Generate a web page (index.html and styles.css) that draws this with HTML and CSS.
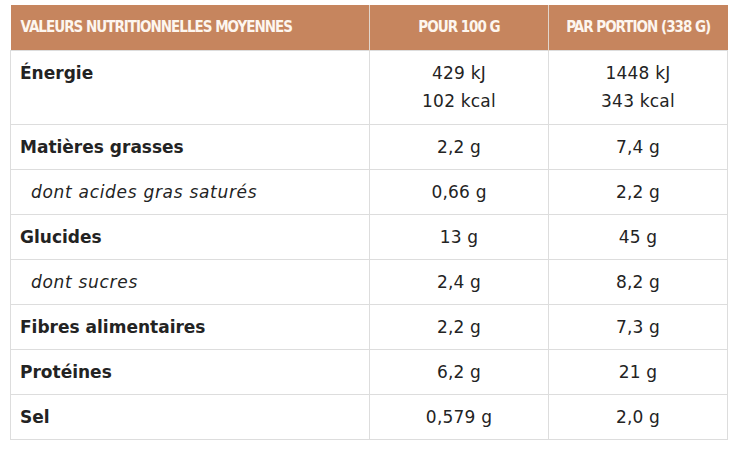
FILE: index.html
```html
<!DOCTYPE html>
<html lang="fr">
<head>
<meta charset="utf-8">
<title>Valeurs nutritionnelles</title>
<link rel="stylesheet" href="styles.css">
</head>
<body>
<table class="nutri">
  <colgroup>
    <col class="c-name">
    <col class="c-val">
    <col class="c-val">
  </colgroup>
  <thead>
    <tr>
      <th class="h-name">VALEURS NUTRITIONNELLES MOYENNES</th>
      <th>POUR 100 G</th>
      <th>PAR PORTION (338 G)</th>
    </tr>
  </thead>
  <tbody>
    <tr class="energy">
      <td class="name">Énergie</td>
      <td>429 kJ<br>102 kcal</td>
      <td>1448 kJ<br>343 kcal</td>
    </tr>
    <tr>
      <td class="name">Matières grasses</td>
      <td>2,2 g</td>
      <td>7,4 g</td>
    </tr>
    <tr>
      <td class="sub">dont acides gras saturés</td>
      <td>0,66 g</td>
      <td>2,2 g</td>
    </tr>
    <tr>
      <td class="name">Glucides</td>
      <td>13 g</td>
      <td>45 g</td>
    </tr>
    <tr>
      <td class="sub">dont sucres</td>
      <td>2,4 g</td>
      <td>8,2 g</td>
    </tr>
    <tr>
      <td class="name">Fibres alimentaires</td>
      <td>2,2 g</td>
      <td>7,3 g</td>
    </tr>
    <tr>
      <td class="name">Protéines</td>
      <td>6,2 g</td>
      <td>21 g</td>
    </tr>
    <tr>
      <td class="name">Sel</td>
      <td>0,579 g</td>
      <td>2,0 g</td>
    </tr>
  </tbody>
</table>
</body>
</html>
```
FILE: styles.css
```css
html, body {
  margin: 0;
  padding: 0;
  background: #ffffff;
}
body {
  padding: 5px 10px;
  font-family: "DejaVu Sans", "Open Sans", sans-serif;
  color: #232323;
}
.nutri {
  width: 718px;
  border-collapse: collapse;
  table-layout: fixed;
}
.c-name { width: 359px; }
.c-val { width: 179px; }
.nutri th {
  background: #c6855e;
  color: #fdf6ef;
  font-family: "DejaVu Sans Condensed", "DejaVu Sans", sans-serif;
  font-stretch: condensed;
  font-weight: 700;
  font-size: 15px;
  letter-spacing: -1px;
  height: 45px;
  padding: 0 10px;
  text-align: center;
  border-left: 1px solid #e2d6cc;
  box-sizing: border-box;
}
.nutri th.h-name {
  text-align: left;
  border-left: none;
}
.nutri td {
  border: 1px solid #dddddd;
  padding: 8px 10px;
  font-size: 17px;
  line-height: 28px;
  text-align: center;
  vertical-align: top;
  letter-spacing: 0.2px;
}
.nutri td.name {
  text-align: left;
  font-weight: 700;
  letter-spacing: 0;
  padding-left: 9px;
}
.nutri td.sub {
  text-align: left;
  font-style: italic;
  padding-left: 20px;
  letter-spacing: 0.7px;
}
.nutri tr.energy td {
  padding-bottom: 9px;
}
```
